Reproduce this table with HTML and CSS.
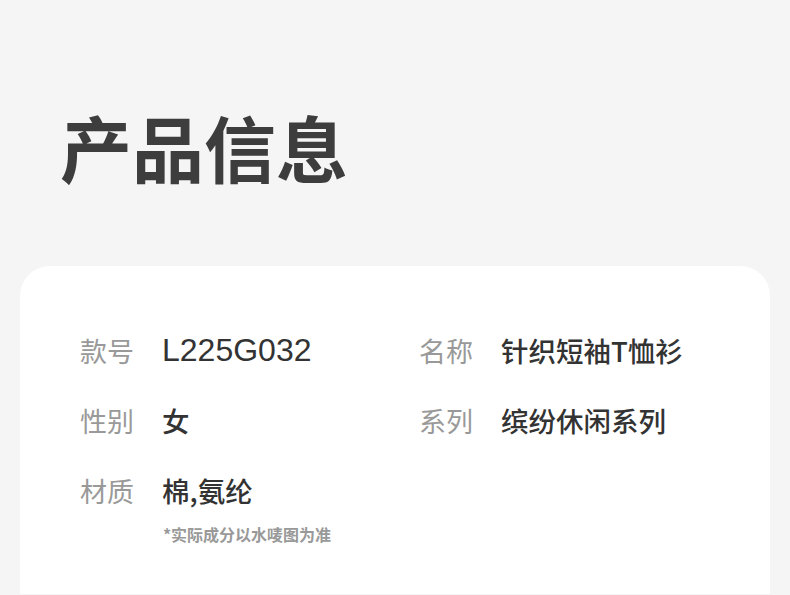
FILE: index.html
```html
<!DOCTYPE html>
<html lang="zh-CN">
<head>
    <meta charset="UTF-8">
    <meta name="viewport" content="width=device-width, initial-scale=1.0">
    <title>产品信息</title>
    <link rel="stylesheet" href="styles.css">
</head>
<body>
    <header class="page-header">
        <h1>产品信息</h1>
    </header>
    <main class="card">
        <div class="info-grid">
            <div class="info-item">
                <span class="label">款号</span>
                <span class="value value-code">L225G032</span>
            </div>
            <div class="info-item">
                <span class="label">名称</span>
                <span class="value">针织短袖T恤衫</span>
            </div>
            <div class="info-item">
                <span class="label">性别</span>
                <span class="value">女</span>
            </div>
            <div class="info-item">
                <span class="label">系列</span>
                <span class="value">缤纷休闲系列</span>
            </div>
            <div class="info-item">
                <span class="label">材质</span>
                <span class="value">棉,氨纶</span>
            </div>
        </div>
        <p class="note">*实际成分以水唛图为准</p>
    </main>
</body>
</html>
```

FILE: styles.css
```css
body {
    margin: 0;
    background-color: #f5f5f5;
    font-family: "Liberation Sans", "Noto Sans CJK SC", sans-serif;
}

.page-header {
    padding: 110px 60px 0;
}

.page-header h1 {
    margin: 0;
    font-family: "Noto Sans CJK SC", sans-serif;
    font-size: 72px;
    line-height: 72px;
    font-weight: 700;
    color: #3d3d3d;
}

.card {
    margin: 84px 20px 0;
    padding: 64px 60px 50px;
    background-color: #fff;
    border-radius: 30px 30px 0 0;
}

.info-grid {
    display: grid;
    grid-template-columns: 339px 1fr;
    row-gap: 30px;
}

.info-item {
    display: flex;
    align-items: center;
    height: 40px;
}

.label {
    width: 82px;
    font-family: "Noto Sans CJK SC", sans-serif;
    font-size: 27px;
    color: #999;
}

.value {
    font-family: "Noto Sans CJK SC", sans-serif;
    font-size: 27.5px;
    font-weight: 500;
    color: #333;
}

.value-code {
    font-family: "Liberation Sans", sans-serif;
    font-size: 32px;
    font-weight: 400;
}

.note {
    margin: 14px 0 0 83px;
    font-family: "Noto Sans CJK SC", sans-serif;
    font-size: 16px;
    line-height: 20px;
    font-weight: 700;
    color: #999;
}
```
